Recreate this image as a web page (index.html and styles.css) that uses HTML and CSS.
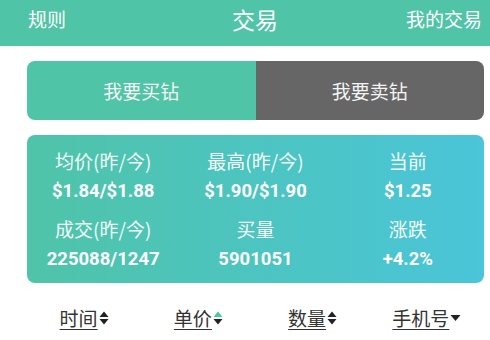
FILE: index.html
```html
<!DOCTYPE html>
<html lang="zh">
<head>
    <meta charset="UTF-8">
    <meta name="viewport" content="width=device-width, initial-scale=1.0">
    <title>交易</title>
    <link rel="stylesheet" href="styles.css">
</head>
<body>
    <header class="topbar">
        <span class="topbar-side">规则</span>
        <span class="topbar-title">交易</span>
        <span class="topbar-side">我的交易</span>
    </header>

    <div class="content">
        <div class="tabs">
            <div class="tab tab-buy">我要买钻</div>
            <div class="tab tab-sell">我要卖钻</div>
        </div>

        <div class="stats">
            <div class="stat">
                <div class="stat-label">均价(昨/今)</div>
                <div class="stat-value">$1.84/$1.88</div>
            </div>
            <div class="stat">
                <div class="stat-label">最高(昨/今)</div>
                <div class="stat-value">$1.90/$1.90</div>
            </div>
            <div class="stat">
                <div class="stat-label">当前</div>
                <div class="stat-value">$1.25</div>
            </div>
            <div class="stat">
                <div class="stat-label">成交(昨/今)</div>
                <div class="stat-value">225088/1247</div>
            </div>
            <div class="stat">
                <div class="stat-label">买量</div>
                <div class="stat-value">5901051</div>
            </div>
            <div class="stat">
                <div class="stat-label">涨跌</div>
                <div class="stat-value">+4.2%</div>
            </div>
        </div>

        <div class="sorts">
            <div class="sort">
                <span class="sort-name">时间</span>
                <svg class="sort-icon" width="10" height="16" viewBox="0 0 10 16"><path d="M0.5 7 L5 1.5 L9.5 7 Z" fill="#222"/><path d="M0.5 9 L5 14.5 L9.5 9 Z" fill="#222"/></svg>
            </div>
            <div class="sort">
                <span class="sort-name">单价</span>
                <svg class="sort-icon" width="10" height="16" viewBox="0 0 10 16"><path d="M0.5 7 L5 1.5 L9.5 7 Z" fill="#4fc4a6"/><path d="M0.5 9 L5 14.5 L9.5 9 Z" fill="#222"/></svg>
            </div>
            <div class="sort">
                <span class="sort-name">数量</span>
                <svg class="sort-icon" width="10" height="16" viewBox="0 0 10 16"><path d="M0.5 7 L5 1.5 L9.5 7 Z" fill="#222"/><path d="M0.5 9 L5 14.5 L9.5 9 Z" fill="#222"/></svg>
            </div>
            <div class="sort">
                <span class="sort-name">手机号</span>
                <svg class="sort-icon" width="11" height="16" viewBox="0 0 11 16"><path d="M0.5 5 L5.5 11 L10.5 5 Z" fill="#222"/></svg>
            </div>
        </div>
    </div>
</body>
</html>
```

FILE: styles.css
```css
body {
    margin: 0;
    padding: 0;
    background: #fff;
    font-family: "Noto Sans CJK SC", "Noto Sans", sans-serif;
    color: #333;
}

.topbar {
    height: 46px;
    background: #4fc4a6;
    color: #fff;
    display: flex;
    align-items: center;
    justify-content: space-between;
    padding: 0 8px 9px 28px;
    box-sizing: border-box;
}

.topbar-side {
    font-size: 19px;
}

.topbar-title {
    font-size: 23px;
    margin-left: 38px;
}

.content {
    padding: 0 6px 0 27px;
}

.tabs {
    display: flex;
    margin-top: 15px;
    height: 59px;
    border-radius: 8px;
    overflow: hidden;
}

.tab {
    flex: 1;
    display: flex;
    align-items: center;
    justify-content: center;
    font-size: 19px;
    color: #f4f4f4;
}

.tab-buy {
    background: #4fc4a6;
}

.tab-sell {
    background: #666;
}

.stats {
    margin-top: 15px;
    height: 148px;
    box-sizing: border-box;
    padding-top: 11px;
    border-radius: 8px;
    background: linear-gradient(90deg, #4fc4a8, #4ac5d9);
    color: #fff;
    display: grid;
    grid-template-columns: 1fr 1fr 1fr;
    row-gap: 8px;
    align-content: start;
}

.stat {
    text-align: center;
}

.stat-label {
    font-size: 19px;
    line-height: 30px;
    color: #f2fbf8;
}

.stat-value {
    font-family: Roboto, "Noto Sans", sans-serif;
    font-weight: bold;
    font-size: 18.5px;
    line-height: 30px;
}

.sorts {
    display: flex;
    margin-top: 22px;
}

.sort {
    flex: 1;
    display: flex;
    align-items: center;
    justify-content: center;
    line-height: 26px;
}

.sort-name {
    font-size: 19px;
    color: #333;
    text-decoration: underline;
    text-underline-offset: 3px;
    text-decoration-thickness: 1px;
}

.sort-icon {
    margin-left: 1px;
}
```
